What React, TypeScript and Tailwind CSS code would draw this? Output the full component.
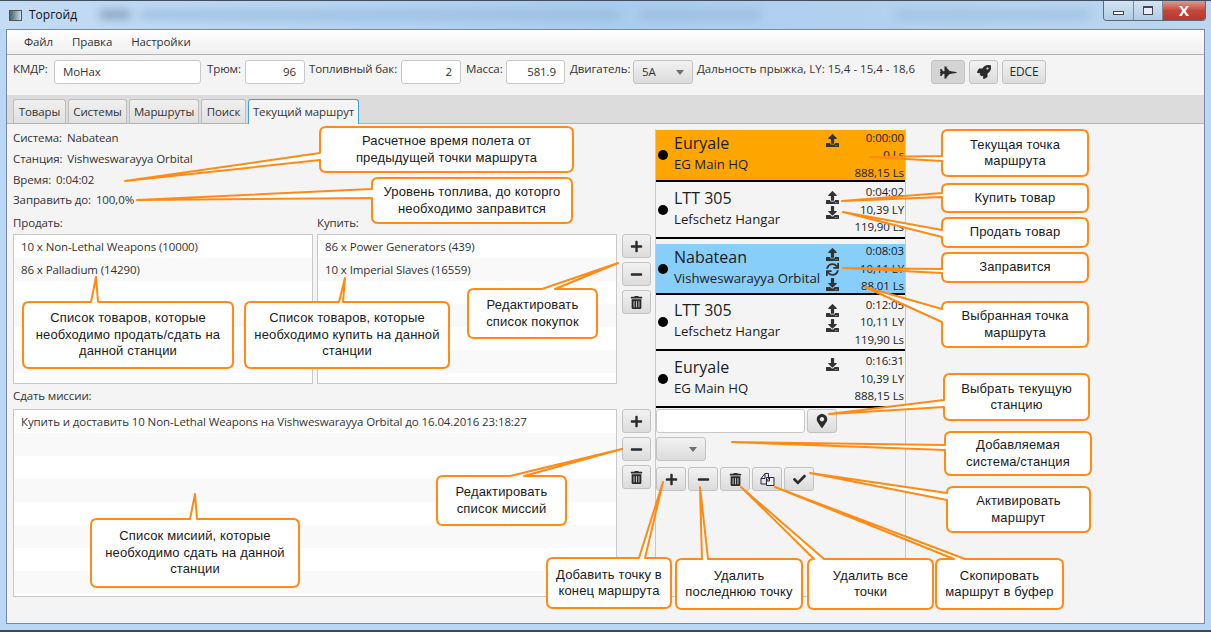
import type { ReactNode } from 'react'
import {
  FaCheck,
  FaDownload,
  FaFighterJet,
  FaMapMarkerAlt,
  FaMinus,
  FaPlus,
  FaRocket,
  FaSync,
  FaTrashAlt,
  FaUpload,
} from 'react-icons/fa'

type Side = 'left' | 'top'

type Callout = {
  x: number
  y: number
  w: number
  h: number
  tip: [number, number]
  side: Side
  base: [number, number]
  lines: string[]
}

const callouts: Callout[] = [
  { x: 320, y: 127, w: 253, h: 45, tip: [125, 181], side: 'left', base: [153, 160], lines: ['Расчетное время полета от', 'предыдущей точки маршрута'] },
  { x: 372, y: 178, w: 200, h: 45, tip: [137, 200], side: 'left', base: [189, 198], lines: ['Уровень топлива, до которго', 'необходимо заправится'] },
  { x: 468, y: 289, w: 129, h: 49, tip: [618, 263], side: 'top', base: [542, 555], lines: ['Редактировать', 'список покупок'] },
  { x: 23, y: 302, w: 210, h: 66, tip: [96, 277], side: 'top', base: [91, 98], lines: ['Список товаров, которые', 'необходимо продать/сдать на', 'данной станции'] },
  { x: 245, y: 302, w: 204, h: 66, tip: [345, 278], side: 'top', base: [339, 343], lines: ['Список товаров, которые', 'необходимо купить на данной', 'станции'] },
  { x: 437, y: 476, w: 129, h: 49, tip: [622, 449], side: 'top', base: [510, 524], lines: ['Редактировать', 'список миссий'] },
  { x: 91, y: 519, w: 208, h: 68, tip: [195, 494], side: 'top', base: [190, 197], lines: ['Список мисиий, которые', 'необходимо сдать на данной', 'станции'] },
  { x: 942, y: 130, w: 146, h: 46, tip: [870, 157], side: 'left', base: [156, 161], lines: ['Текущая точка', 'маршрута'] },
  { x: 942, y: 184, w: 146, h: 28, tip: [842, 201], side: 'left', base: [193, 197], lines: ['Купить товар'] },
  { x: 942, y: 218, w: 146, h: 29, tip: [843, 212], side: 'left', base: [230, 237], lines: ['Продать товар'] },
  { x: 942, y: 253, w: 146, h: 29, tip: [843, 268], side: 'left', base: [269, 273], lines: ['Заправится'] },
  { x: 942, y: 302, w: 146, h: 45, tip: [865, 287], side: 'left', base: [309, 322], lines: ['Выбранная точка', 'маршрута'] },
  { x: 944, y: 374, w: 145, h: 46, tip: [829, 414], side: 'left', base: [400, 407], lines: ['Выбрать текущую', 'станцию'] },
  { x: 945, y: 432, w: 146, h: 43, tip: [732, 442], side: 'left', base: [445, 450], lines: ['Добавляемая', 'система/станция'] },
  { x: 947, y: 487, w: 143, h: 45, tip: [810, 473], side: 'left', base: [493, 500], lines: ['Активировать', 'маршрут'] },
  { x: 547, y: 558, w: 124, h: 50, tip: [663, 482], side: 'top', base: [639, 645], lines: ['Добавить точку в', 'конец маршрута'] },
  { x: 676, y: 559, w: 126, h: 50, tip: [700, 487], side: 'top', base: [702, 708], lines: ['Удалить', 'последнюю точку'] },
  { x: 808, y: 559, w: 125, h: 50, tip: [741, 487], side: 'top', base: [814, 824], lines: ['Удалить все', 'точки'] },
  { x: 936, y: 559, w: 127, h: 50, tip: [775, 487], side: 'top', base: [954, 965], lines: ['Скопировать', 'маршрут в буфер'] },
]

// rounded box with a wedge going out of the left or top edge
function calloutPath({ x, y, w, h, tip, side, base }: Callout) {
  const r = 6
  const top = side === 'top' ? `L${base[0]} ${y} L${tip[0]} ${tip[1]} L${base[1]} ${y} ` : ''
  const left = side === 'left' ? `L${x} ${base[1]} L${tip[0]} ${tip[1]} L${x} ${base[0]} ` : ''
  return (
    `M${x + r} ${y} ${top}L${x + w - r} ${y} Q${x + w} ${y} ${x + w} ${y + r} ` +
    `L${x + w} ${y + h - r} Q${x + w} ${y + h} ${x + w - r} ${y + h} ` +
    `L${x + r} ${y + h} Q${x} ${y + h} ${x} ${y + h - r} ${left}L${x} ${y + r} Q${x} ${y} ${x + r} ${y} Z`
  )
}

function Annotations() {
  return (
    <>
      <svg className="absolute left-0 top-0" width={1211} height={632}>
        {callouts.map((c) => (
          <path key={c.lines[0] + c.x} d={calloutPath(c)} fill="#ffffff" stroke="#ff8a14" strokeWidth={2} strokeLinejoin="round" />
        ))}
      </svg>
      {callouts.map((c) => (
        <div
          key={c.lines[0] + c.x}
          className="absolute flex flex-col items-center justify-center text-center font-['Liberation_Sans',sans-serif] text-[13px] leading-[16.5px] tracking-[0.15px] text-[#1a1a1a]"
          style={{ left: c.x, top: c.y, width: c.w, height: c.h }}
        >
          {c.lines.map((l) => (
            <span key={l} className="whitespace-nowrap">{l}</span>
          ))}
        </div>
      ))}
    </>
  )
}

function CopyIcon() {
  return (
    <svg width="15" height="14" viewBox="0 0 15 14" fill="none" stroke="#2b2440" strokeWidth="1">
      <path d="M1 6.5l4-5h3.5v4M1 6.5v5.5h5M1 6.5h4v-5" />
      <path d="M6.5 5.5h7.5v8h-7.500z" fill="#f0f0f0" />
      <path d="M6.500 9l3-3.500v3.500z" />
    </svg>
  )
}

function Btn({ children, className = 'w-[29px]', pressed }: { children: ReactNode; className?: string; pressed?: boolean }) {
  return (
    <button
      type="button"
      className={`flex h-6 items-center justify-center rounded-[3px] border border-[#c2c2c2] text-[#2b2b2b] ${pressed ? 'bg-[#d4d4d4]' : 'bg-gradient-to-b from-[#f2f2f2] to-[#dcdcdc]'} ${className}`}
    >
      {children}
    </button>
  )
}

function Field({ value, className, right }: { value: string; className: string; right?: boolean }) {
  return (
    <div
      className={`flex h-6 items-center rounded-[3px] border border-[#c8c8c8] bg-white px-2 text-[#333] ${right ? 'justify-end' : ''} ${className}`}
    >
      {value}
    </div>
  )
}

function Combo({ value, className }: { value: string; className: string }) {
  return (
    <div className={`flex h-6 items-center justify-between rounded-[3px] border border-[#c2c2c2] bg-gradient-to-b from-[#f2f2f2] to-[#dcdcdc] pl-2 pr-2 text-[#333] ${className}`}>
      <span>{value}</span>
      <span className="h-0 w-0 border-x-4 border-t-[5px] border-x-transparent border-t-[#6e6e6e]" />
    </div>
  )
}

function ListRows({ items, rows }: { items: string[]; rows: number }) {
  return (
    <>
      {Array.from({ length: rows }).map((_, i) => (
        <div key={i} className={`h-[23px] whitespace-nowrap pl-[7px] leading-[23px] text-[#333] ${i % 2 ? 'bg-[#f9f9f9]' : 'bg-white'}`}>
          {items[i] ?? ''}
        </div>
      ))}
    </>
  )
}

function SideButtons() {
  return (
    <div className="flex flex-col gap-[4px]">
      <Btn><FaPlus size={13} /></Btn>
      <Btn><FaMinus size={13} /></Btn>
      <Btn><FaTrashAlt size={13} /></Btn>
    </div>
  )
}

type Stop = {
  name: string
  station: string
  time: string
  dist: string
  ls: string
  icons: ('up' | 'down' | 'sync')[]
  iconPad: string
  height: string
  tone?: string
  pad?: string
}

const stops: Stop[] = [
  { name: 'Euryale', station: 'EG Main HQ', time: '0:00:00', dist: '0 Ls', ls: '888,15 Ls', icons: ['up'], iconPad: 'pt-[3px]', tone: 'bg-[#ffa500]', height: 'h-[50px]' },
  { name: 'LTT 305', station: 'Lefschetz Hangar', time: '0:04:02', dist: '10,39 LY', ls: '119,90 Ls', icons: ['up', 'down'], iconPad: 'pt-[8px]', height: 'h-[55px]' },
  { name: 'Nabatean', station: 'Vishweswarayya Orbital', time: '0:08:03', dist: '10,11 LY', ls: '88,01 Ls', icons: ['up', 'sync', 'down'], iconPad: 'pt-[3px]', tone: 'bg-[#87cefa]', height: 'h-[49px]', pad: 'mt-[5px]' },
  { name: 'LTT 305', station: 'Lefschetz Hangar', time: '0:12:05', dist: '10,11 LY', ls: '119,90 Ls', icons: ['up', 'down'], iconPad: 'pt-[8px]', height: 'h-[54px]' },
  { name: 'Euryale', station: 'EG Main HQ', time: '0:16:31', dist: '10,39 LY', ls: '888,15 Ls', icons: ['down'], iconPad: 'pt-[6px]', height: 'h-[55px]' },
]

function StopCell({ stop }: { stop: Stop }) {
  return (
    <div className={stop.pad}>
      <div className={`flex items-center pl-[2px] text-[#1c1c1c] ${stop.height} ${stop.tone ?? 'bg-[#f4f4f4]'}`}>
        <span className="h-[10px] w-[10px] shrink-0 rounded-full bg-black" />
        <div className="ml-[6px] w-[151px] shrink-0 pb-[4px]">
          <div className="text-[16px] leading-[22px] tracking-normal">{stop.name}</div>
          <div className="whitespace-nowrap text-[13.2px] leading-[20px] tracking-normal">{stop.station}</div>
        </div>
        <div className={`flex h-full w-[14px] shrink-0 flex-col items-center text-[#333] [&>svg]:my-[1px] [&>svg]:shrink-0 ${stop.iconPad}`}>
          {stop.icons.map((ic, i) =>
            ic === 'up' ? <FaUpload key={i} size={13} /> : ic === 'down' ? <FaDownload key={i} size={13} /> : <FaSync key={i} size={13} />,
          )}
        </div>
        <div className="flex-1 pr-[1px] text-right leading-[17.5px]">
          <div>{stop.time}</div>
          <div>{stop.dist}</div>
          <div>{stop.ls}</div>
        </div>
      </div>
      <div className="h-[2px] bg-black" />
    </div>
  )
}

const tabs = ['Товары', 'Системы', 'Маршруты', 'Поиск']
const tabWidths = ['w-[53px]', 'w-[59px]', 'w-[70px]', 'w-[45px]']

export default function App() {
  return (
    <div className="relative h-[632px] w-[1211px] overflow-hidden bg-[#b9d8f7] font-['Open_Sans',sans-serif] text-[11.5px] tracking-[-0.1px] text-[#333]">
      {/* title bar */}
      <div className="relative flex h-[29px] items-center overflow-hidden border-t border-[#3f4f60] bg-gradient-to-r from-[#c4dcf4] via-[#a9cdef] to-[#bcd6ee] pl-[9px]">
        <div className="absolute left-[100px] top-[9px] h-[9px] w-[30px] bg-[#8aa5c0] blur-[4px]" />
        <div className="absolute left-[140px] top-[11px] h-[6px] w-[480px] bg-[#93b6da] blur-[5px]" />
        <div className="absolute left-[640px] top-[11px] h-[6px] w-[120px] bg-[#93b6da] blur-[5px]" />
        <div className="absolute left-[895px] top-[11px] h-[6px] w-[195px] bg-[#98bbdd] blur-[5px]" />
        <div className="relative h-[11px] w-[13px] border border-[#555] bg-gradient-to-r from-[#446666] to-[#ccddee]" />
        <span className="relative ml-[7px] text-[12px] tracking-normal text-[#111]">Торгойд</span>
        <div className="absolute right-[5px] top-0 flex h-[20px] w-[103px] overflow-hidden rounded-b-[4px] border border-t-0 border-[#5a6a7a]">
          <div className="flex w-[29px] items-end justify-center bg-gradient-to-b from-[#d4e4f2] to-[#b0cbe4] pb-[5px]">
            <span className="h-[4px] w-[11px] border border-[#445] bg-white" />
          </div>
          <div className="flex w-[30px] items-center justify-center border-x border-[#7b8b9b] bg-gradient-to-b from-[#d4e4f2] to-[#b0cbe4]">
            <span className="h-[9px] w-[10px] border border-t-2 border-[#445] bg-[#e8eef4]" />
          </div>
          <div className="flex flex-1 items-center justify-center bg-gradient-to-b from-[#d99a90] via-[#c4473a] to-[#b9362c] text-[15px] font-bold leading-none text-white">
            X
          </div>
        </div>
      </div>

      {/* window body */}
      <div className="mx-[6px] flex h-[595px] w-[1199px] flex-col border border-[#7a8a9a] bg-[#f4f4f4]">
        {/* menu */}
        <div className="flex h-[25px] shrink-0 items-center gap-[19px] border-b border-[#b4b4b4] bg-gradient-to-b from-white to-[#efefef] pl-[17px]">
          <span>Файл</span>
          <span>Правка</span>
          <span>Настройки</span>
        </div>
        {/* toolbar */}
        <div className="flex h-[40px] shrink-0 items-start pl-[6px] pt-[5px]">
          <span className="w-[41px]">КМДР:</span>
          <Field value="MoHax" className="w-[147px]" />
          <span className="ml-[6px] w-[38px]">Трюм:</span>
          <Field value="96" className="w-[60px]" right />
          <span className="ml-[4px] w-[92px]">Топливный бак:</span>
          <Field value="2" className="w-[60px]" right />
          <span className="ml-[5px] w-[40px]">Масса:</span>
          <Field value="581.9" className="w-[59px]" right />
          <span className="ml-[5px] w-[63px]">Двигатель:</span>
          <Combo value="5A" className="w-[60px]" />
          <span className="ml-[4px] w-[234px] whitespace-nowrap tracking-normal">Дальность прыжка, LY: 15,4 - 15,4 - 18,6</span>
          <Btn className="w-[34px]" pressed><FaFighterJet size={17} /></Btn>
          <Btn className="ml-[4px] w-[29px]"><FaRocket size={14} /></Btn>
          <Btn className="ml-[4px] w-[44px] text-[12px]">EDCE</Btn>
        </div>
        {/* tab header */}
        <div className="flex h-[29px] shrink-0 items-end gap-[2px] border-b border-[#b4b4b4] bg-[#dcdcdc] pl-[6px]">
          {tabs.map((t, i) => (
            <div
              key={t}
              className={`flex h-[24px] items-center justify-center rounded-t-[3px] border border-b-0 border-[#bdbdbd] bg-gradient-to-b from-[#f0f0f0] to-[#e0e0e0] ${tabWidths[i]}`}
            >
              {t}
            </div>
          ))}
          <div className="flex h-[25px] w-[111px] translate-y-px items-center justify-center rounded-t-[3px] border border-b-0 border-[#3da4d3] bg-[#f4f4f4]">
            Текущий маршрут
          </div>
        </div>
        {/* current route page */}
        <div className="flex min-h-0 flex-1 pl-[6px] pt-[3px]">
          <div className="w-[604px] shrink-0">
            <div className="h-[21px] leading-[21px]">Система: <span className="ml-[2px]">Nabatean</span></div>
            <div className="h-[21px] leading-[21px]">Станция: <span className="ml-[2px]">Vishweswarayya Orbital</span></div>
            <div className="h-[21px] leading-[21px]">Время: <span className="ml-[2px]">0:04:02</span></div>
            <div className="h-[20px] leading-[20px]">Заправить до: <span className="ml-[2px]">100,0%</span></div>
            <div className="mt-[3px] flex h-[21px] leading-[20px]">
              <span className="w-[304px]">Продать:</span>
              <span>Купить:</span>
            </div>
            <div className="flex gap-[4px]">
              <div className="h-[150px] w-[300px] overflow-hidden border border-[#c8c8c8] bg-white">
                <ListRows items={['10 x Non-Lethal Weapons (10000)', '86 x Palladium (14290)']} rows={7} />
              </div>
              <div className="h-[150px] w-[300px] overflow-hidden border border-[#c8c8c8] bg-white">
                <ListRows items={['86 x Power Generators (439)', '10 x Imperial Slaves (16559)']} rows={7} />
              </div>
            </div>
            <div className="mt-[3px] h-[22px] leading-[18px]">Сдать миссии:</div>
            <div className="h-[188px] w-[604px] overflow-hidden border border-[#c8c8c8] bg-white">
              <ListRows items={['Купить и доставить 10 Non-Lethal Weapons на Vishweswarayya Orbital до 16.04.2016 23:18:27']} rows={9} />
            </div>
          </div>
          <div className="ml-[5px] flex w-[29px] shrink-0 flex-col pt-[107px]">
            <SideButtons />
            <div className="mt-[95px]">
              <SideButtons />
            </div>
          </div>
          <div className="ml-[4px] mt-[2px] h-[468px] w-[251px] shrink-0 border-x border-b border-[#c8c8c8] pt-[1px]">
            {stops.map((s, i) => (
              <StopCell key={i} stop={s} />
            ))}
            <div className="mt-[1px] flex gap-[2px]">
              <Field value="" className="w-[149px]" />
              <Btn className="w-[30px]"><FaMapMarkerAlt size={14} /></Btn>
            </div>
            <Combo value="" className="mt-[4px] w-[50px]" />
            <div className="mt-[6px] flex gap-[2px]">
              <Btn className="w-[30px]"><FaPlus size={13} /></Btn>
              <Btn className="w-[30px]"><FaMinus size={13} /></Btn>
              <Btn className="w-[30px]"><FaTrashAlt size={13} /></Btn>
              <Btn className="w-[30px]"><CopyIcon /></Btn>
              <Btn className="w-[30px]"><FaCheck size={13} /></Btn>
            </div>
          </div>
        </div>
      </div>
      <div className="absolute inset-x-0 bottom-0 h-[2px] bg-[#3c4a58]" />
      <Annotations />
    </div>
  )
}
